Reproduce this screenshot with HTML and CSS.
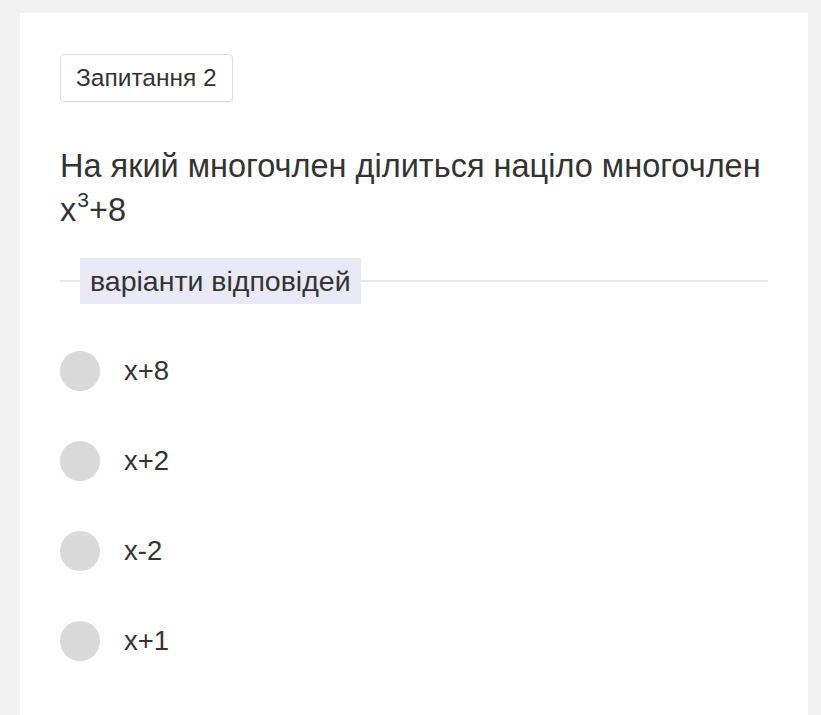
FILE: index.html
```html
<!DOCTYPE html>
<html lang="uk">
<head>
<meta charset="utf-8">
<link rel="stylesheet" href="styles.css">
</head>
<body>
<div class="page">
  <div class="card">
    <div class="badge">Запитання 2</div>
    <div class="question">На який многочлен ділиться націло многочлен x<sup>3</sup>+8</div>
    <fieldset class="answers">
      <legend>варіанти відповідей</legend>
      <div class="option"><span class="radio"></span><span class="label">x+8</span></div>
      <div class="option"><span class="radio"></span><span class="label">x+2</span></div>
      <div class="option"><span class="radio"></span><span class="label">x-2</span></div>
      <div class="option"><span class="radio"></span><span class="label">x+1</span></div>
    </fieldset>
  </div>
</div>
</body>
</html>
```

FILE: styles.css
```css
html, body {
  margin: 0;
  padding: 0;
  background: #f2f2f2;
  height: 100%;
  overflow: hidden;
}
body {
  font-family: "Liberation Sans", Arial, sans-serif;
  color: #333;
}
.page {
  padding: 13px 13px 0 20px;
}
.card {
  background: #fff;
  min-height: 720px;
  padding: 41px 40px 0 40px;
  box-sizing: border-box;
}
.badge {
  display: inline-block;
  border: 1.5px solid #dcdcdc;
  border-radius: 4px;
  padding: 0 15px;
  height: 46px;
  line-height: 46px;
  font-size: 24.5px;
  box-shadow: 0 1px 2px rgba(0,0,0,0.06);
}
.question {
  margin-top: 42px;
  font-size: 32.5px;
  line-height: 44px;
  width: 708px;
}
.question sup {
  font-size: 21px;
  line-height: 0;
  vertical-align: 14px;
  padding-left: 1px;
}
.answers {
  margin: 26px 0 0 0;
  padding: 0;
  border: none;
  border-top: 2px solid #e6e6e6;
  width: 708px;
}
.answers legend {
  margin-left: 20px;
  padding: 0 10px;
  background: #e9e9f5;
  font-size: 28.5px;
  line-height: 46px;
  height: 46px;
}
.option {
  display: flex;
  align-items: center;
  gap: 24px;
  height: 40px;
  margin-top: 50px;
}
.answers legend + .option {
  margin-top: 47px;
}
.radio {
  width: 40px;
  height: 40px;
  border-radius: 50%;
  background: #d9d9d9;
  flex: none;
}
.label {
  font-size: 27.5px;
}
```
